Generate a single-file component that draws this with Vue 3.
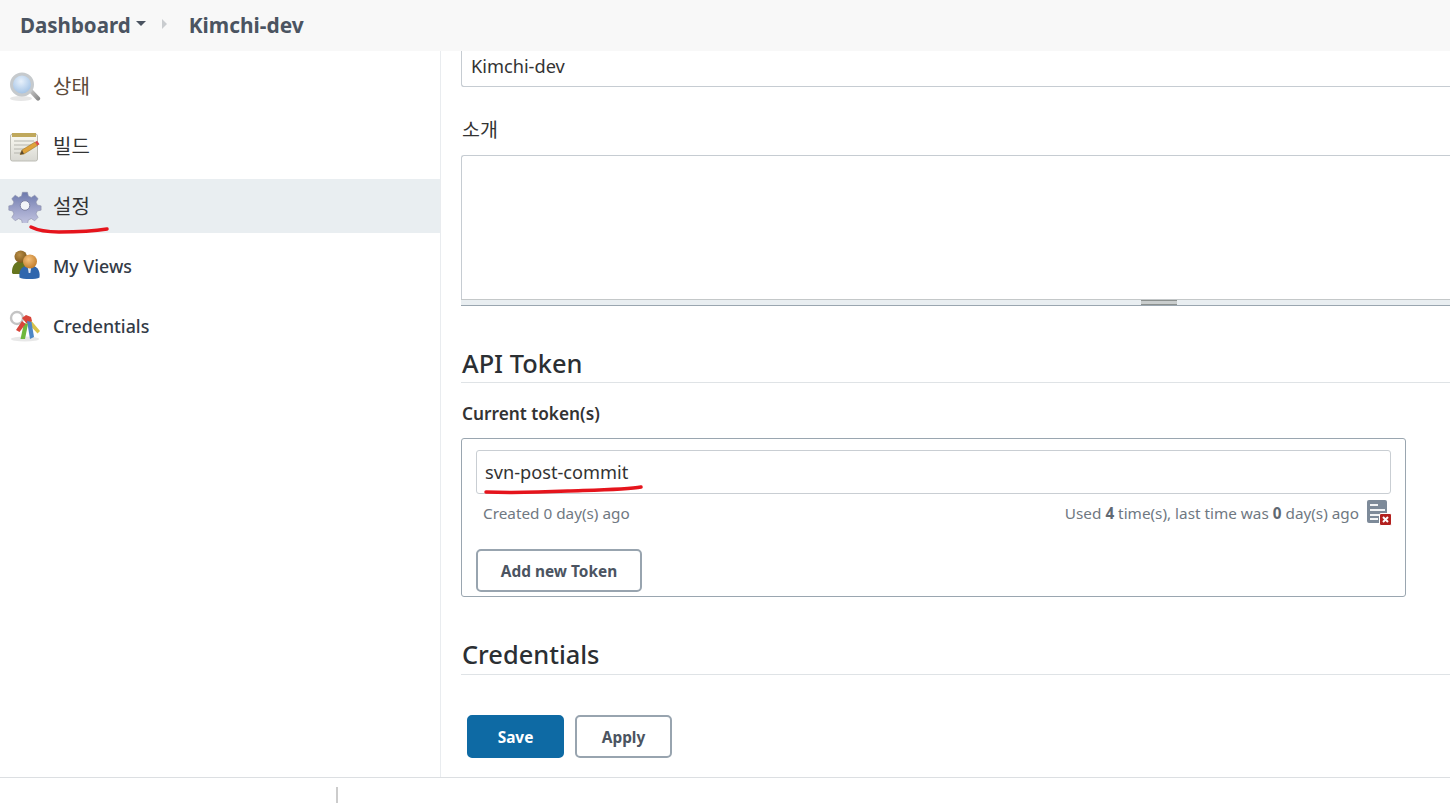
<script setup>
const items = [
  { key: 'status', label: '상태', brown: true },
  { key: 'build', label: '빌드' },
  { key: 'config', label: '설정', active: true },
  { key: 'views', label: 'My Views', latin: true },
  { key: 'creds', label: 'Credentials', latin: true }
]
</script>

<template>
  <div class="page">
    <header class="topbar">
      <span class="crumb">Dashboard</span>
      <span class="caret"></span>
      <span class="sep"></span>
      <span class="crumb last">Kimchi-dev</span>
    </header>

    <div class="body">
      <aside class="side">
        <div v-for="it in items" :key="it.key" class="row" :class="{ active: it.active }">
          <span class="ico">
            <svg v-if="it.key === 'status'" width="32" height="32" viewBox="0 0 32 32">
              <defs>
                <radialGradient id="lens" cx="45%" cy="35%" r="65%"><stop offset="0" stop-color="#e8f1fb"/><stop offset="1" stop-color="#9dbfe4"/></radialGradient>
                <linearGradient id="hnd" x1="0" y1="0" x2="1" y2="1"><stop offset="0" stop-color="#cfcfcf"/><stop offset="1" stop-color="#7f7f7f"/></linearGradient>
              </defs>
              <ellipse cx="12" cy="28.500" rx="11" ry="2.500" fill="#e6e6e6"/>
              <path d="M20 22l3-3 7.500 8a2 2 0 0 1-3 3z" fill="url(#hnd)"/>
              <circle cx="13" cy="14.500" r="10.500" fill="url(#lens)" stroke="#c6cacd" stroke-width="3"/>
            </svg>
            <svg v-else-if="it.key === 'build'" width="32" height="32" viewBox="0 0 32 32">
              <defs><linearGradient id="pad" x1="0" y1="0" x2="0" y2="1"><stop offset="0" stop-color="#fbfaf2"/><stop offset="1" stop-color="#d8d8d2"/></linearGradient></defs>
              <rect x="1.500" y="4" width="27" height="27" rx="2" fill="url(#pad)" stroke="#bdbdb5"/>
              <rect x="3" y="3" width="24" height="4" fill="#bfa85c"/>
              <path d="M5 11h20M5 15h20M5 19h13M5 23h7" stroke="#b6b6ae" stroke-width="1.200"/>
              <path d="M11 24.500l2-4.500L26 12l2.500 3.500L15 24z" fill="#dfa23a" stroke="#8d6a20" stroke-width=".5"/>
              <path d="M26 12l2.500 3.500 2-1.300-2.300-3.500z" fill="#d84a4a"/>
              <path d="M11 24.500l2-4.500 2 4z" fill="#5b4b30"/>
            </svg>
            <svg v-else-if="it.key === 'config'" width="34" height="34" viewBox="0 0 34 34">
              <defs><linearGradient id="gear" x1="0" y1="0" x2="0" y2="1"><stop offset="0" stop-color="#6c79ad"/><stop offset=".5" stop-color="#9aa0c8"/><stop offset="1" stop-color="#c2c4e0"/></linearGradient></defs>
              <path d="M14 1.500h6l1 4.500 3.500 1.500 4-2.500 4 4-2.500 4 1.500 3.500 4.500 1v5l-4.500 1-1.500 3.500 2.500 4-4 4-4-2.500-3.500 1.500-1 4.500h-6l-1-4.500-3.500-1.500-4 2.500-4-4 2.500-4-1.500-3.500-4.500-1v-5l4.500-1 1.500-3.500-2.500-4 4-4 4 2.500 3.500-1.500z" transform="translate(2.500 2) scale(.85)" fill="url(#gear)" stroke="#8e92aa" stroke-width=".7" stroke-linejoin="round"/>
              <circle cx="17" cy="16.500" r="4.800" fill="#f2f4f8" stroke="#7c81a4"/>
            </svg>
            <svg v-else-if="it.key === 'views'" width="32" height="32" viewBox="0 0 32 32">
              <defs><radialGradient id="f1" cx="40%" cy="35%" r="70%"><stop offset="0" stop-color="#f6c27c"/><stop offset="1" stop-color="#c07a28"/></radialGradient>
              <radialGradient id="f2" cx="40%" cy="35%" r="70%"><stop offset="0" stop-color="#bb8f48"/><stop offset="1" stop-color="#7a5518"/></radialGradient></defs>
              <path d="M3 23c-.5-8 4-12 9-12s8 3 8 9v4H4z" fill="#66751f"/>
              <circle cx="11.700" cy="6.700" r="6.200" fill="url(#f2)"/>
              <path d="M10.500 27.500C9.500 19 14 15.500 20.500 15.500S31.500 19 30.500 27.500c-3 2-17 2-20 0z" fill="#2f66ad"/>
              <path d="M18.500 16h4l-1.200 7h-1.600z" fill="#dfe7f2"/>
              <circle cx="21" cy="11.500" r="7" fill="url(#f1)"/>
            </svg>
            <svg v-else width="32" height="32" viewBox="0 0 32 32">
              <ellipse cx="16" cy="29" rx="14" ry="2.500" fill="#e8e8e8"/>
              <circle cx="8" cy="8" r="6" fill="none" stroke="#c4c4c4" stroke-width="2.400"/>
              <path d="M20 8l11 13-2.500 2.500L17 11z" fill="#d8c24a"/>
              <path d="M13 8l4-3 5 2 1 4-5 3z" fill="#d8453a"/>
              <path d="M18 11l4.500 1 2.500 15-4 2z" fill="#4e86c4"/>
              <path d="M15 13l4 1-3 15h-4.500z" fill="#6fb83c"/>
              <path d="M13 11l3.500 3-6 8-3.500-2z" fill="#d8453a"/>
            </svg>
          </span>
          <span class="lbl" :class="{ latin: it.latin, brown: it.brown }">{{ it.label }}</span>
          <svg v-if="it.active" class="mark mark-side" width="84" height="12" viewBox="0 0 84 12">
            <path d="M3 4c8 4 16 5 28 5 18 0 36-1 48-3" fill="none" stroke="#e5141c" stroke-width="3.500" stroke-linecap="round"/>
          </svg>
        </div>
      </aside>

      <main class="main">
        <input class="field top" value="Kimchi-dev" />
        <div class="label">소개</div>
        <div class="area"></div>
        <div class="grip"><span></span></div>

        <h2 class="h first">API Token</h2>
        <div class="sub">Current token(s)</div>
        <section class="box">
          <div class="token">
            svn-post-commit
            <svg class="mark mark-token" width="160" height="14" viewBox="0 0 160 14">
              <path d="M2 11c28 1 60 0 82-1 30-1 60-1.500 73-4" fill="none" stroke="#e5141c" stroke-width="3.500" stroke-linecap="round"/>
            </svg>
          </div>
          <div class="meta">
            <span>Created 0 day(s) ago</span>
            <span class="used">
              <span>Used <b>4</b> time(s), last time was <b>0</b> day(s) ago</span>
              <svg class="rev" width="26" height="28" viewBox="0 0 26 28">
                <rect x="1" y="1" width="20" height="23" rx="2" fill="#7d8a99"/>
                <path d="M4 6h8M4 11h15M4 16h12M4 20h8" stroke="#f2f4f6" stroke-width="2"/>
                <rect x="13.500" y="14.500" width="12" height="12" rx="1.500" fill="#b3211f" stroke="#fff"/>
                <path d="M17 18l5 5M22 18l-5 5" stroke="#fff" stroke-width="2"/>
              </svg>
            </span>
          </div>
          <button class="btn add">Add new Token</button>
        </section>

        <h2 class="h second">Credentials</h2>
        <div class="actions">
          <button class="btn save">Save</button>
          <button class="btn">Apply</button>
        </div>
      </main>
    </div>

    <footer class="foot"><span class="tick"></span></footer>
  </div>
</template>

<style>
html, body { margin: 0; overflow: hidden; }
</style>

<style scoped>
.page {
  width: 1450px;
  height: 803px;
  display: flex;
  flex-direction: column;
  overflow: hidden;
  background: #fff;
  color: #333;
  font-family: "Noto Sans", "Noto Sans CJK KR", sans-serif;
}
.topbar {
  height: 51px;
  flex: none;
  background: #f8f8f8;
  display: flex;
  align-items: center;
  padding-left: 20px;
  padding-bottom: 2px;
  box-sizing: border-box;
}
.crumb { font-size: 20.500px; font-weight: 700; color: #4b5461; }
.crumb.last { font-size: 20.900px; }
.caret {
  margin-left: 5px;
  margin-top: -2px;
  border-left: 5px solid transparent;
  border-right: 5px solid transparent;
  border-top: 5px solid #4b5461;
}
.sep {
  margin: -1px 22px 0 16px;
  border-top: 5px solid transparent;
  border-bottom: 5px solid transparent;
  border-left: 5px solid #c9cccf;
}
.body { flex: 1; display: flex; min-height: 0; }
.side {
  width: 441px;
  flex: none;
  box-sizing: border-box;
  border-right: 1px solid #e9ecef;
  padding-top: 8px;
  display: flex;
  flex-direction: column;
  gap: 6px;
}
.row {
  position: relative;
  height: 54px;
  display: flex;
  align-items: center;
  padding-left: 8px;
}
.row.active { background: #e9eef1; }
.ico { width: 34px; height: 34px; display: flex; align-items: center; justify-content: center; margin-right: 11px; }
.lbl { font-family: "Noto Sans CJK KR", sans-serif; font-size: 20px; font-weight: 400; color: #333; margin-top: -1px; }
.lbl.brown { color: #5c4a3a; }
.lbl.latin { font-family: "Noto Sans", sans-serif; font-size: 17.800px; font-weight: 500; color: #333b47; margin-top: -1px; }
.mark { position: absolute; pointer-events: none; }
.mark-side { left: 28px; top: 44px; }
.main { flex: 1; min-width: 0; padding-left: 20px; overflow: hidden; }
.field {
  display: block;
  width: 100%;
  height: 36px;
  box-sizing: border-box;
  border: 1px solid #c6ccd2;
  border-top: none;
  border-right: none;
  border-radius: 0 0 0 3px;
  padding: 0 9px 6px;
  font: 400 18.200px "Noto Sans", sans-serif;
  color: #333;
  background: #fff;
  outline: none;
}
.label {
  height: 24px;
  line-height: 24px;
  margin-top: 30px;
  margin-bottom: 14px;
  text-indent: 1px;
  font-family: "Noto Sans CJK KR", sans-serif;
  font-size: 19.500px;
  color: #333;
}
.area {
  height: 144px;
  box-sizing: border-box;
  border: 1px solid #c6ccd2;
  border-right: none;
  border-bottom: none;
  border-radius: 3px 0 0 0;
}
.grip {
  height: 7px;
  box-sizing: border-box;
  background: #e9eef1;
  border-top: 1px solid #c4c8c9;
  border-bottom: 1px solid #9aa6b0;
  display: flex;
  justify-content: center;
  padding-left: 407px;
  align-items: center;
}
.grip span {
  width: 36px;
  height: 5px;
  box-sizing: border-box;
  background: #c9cdcd;
  border-top: 1px solid #8c918f;
  border-bottom: 1px solid #8c918f;
}
.h {
  margin: 0;
  text-indent: 1px;
  font-size: 25.400px;
  font-weight: 500;
  line-height: 32px;
  color: #2b2f33;
  border-bottom: 1px solid #dfe3e6;
  padding-bottom: 3px;
}
.first { margin-top: 41px; }
.second { margin-top: 41px; padding-bottom: 4px; }
.sub { font-size: 17.250px; font-weight: 600; line-height: 22px; margin-top: 20px; text-indent: 1px; color: #333; }
.box {
  width: 945px;
  height: 159px;
  margin-top: 13px;
  box-sizing: border-box;
  border: 1px solid #9aa6b0;
  border-radius: 3px;
  padding: 11px 14px 0;
}
.token {
  position: relative;
  height: 44px;
  box-sizing: border-box;
  border: 1px solid #c9ced3;
  border-radius: 3px;
  padding: 0 8px 1px;
  display: flex;
  align-items: center;
  font-size: 18.200px;
  color: #333;
}
.mark-token { left: 7px; top: 30px; }
.meta {
  display: flex;
  justify-content: space-between;
  align-items: center;
  height: 36px;
  box-sizing: border-box;
  padding: 2px 0 0 7px;
  font-size: 15.300px;
  color: #6f7882;
}
.used { display: flex; align-items: center; }
.used b { color: #5f6872; font-weight: 700; }
.rev { margin-left: 7px; margin-right: -1px; }
.btn {
  height: 43px;
  width: 97px;
  box-sizing: border-box;
  background: #fff;
  border: 2px solid #98a4af;
  border-radius: 5px;
  font: 700 15.400px "Noto Sans", sans-serif;
  color: #4b5461;
  padding: 2px 0 0;
}
.add { width: 166px; margin-top: 19px; display: block; }
.actions { display: flex; gap: 11px; padding-left: 6px; margin-top: 40px; }
.save { background: #0e6aa4; border-color: #0e6aa4; color: #fff; }
.foot {
  height: 26px;
  flex: none;
  box-sizing: border-box;
  border-top: 1px solid #dcdfe2;
  padding: 9px 0 0 336px;
}
.tick { display: block; width: 2px; height: 16px; background: #ccc; }
</style>
